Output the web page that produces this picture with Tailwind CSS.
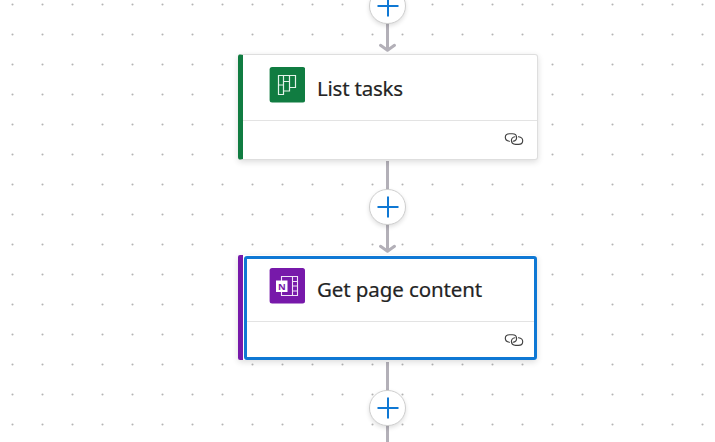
<!DOCTYPE html>
<html lang="en">
<head>
<meta charset="utf-8">
<title>Flow designer</title>
<script src="https://cdn.jsdelivr.net/npm/@tailwindcss/browser@4"></script>
</head>
<body class="relative h-[442px] w-[715px] overflow-hidden bg-white font-['Segoe_UI','Noto_Sans',sans-serif] text-[#242424]">
<svg class="absolute inset-0" width="715" height="442" fill="none">
  <defs>
    <pattern id="dots" width="30" height="30" x="-2" y="-10" patternUnits="userSpaceOnUse"><circle cx="14.5" cy="14.5" r="1.05" fill="#b4b4b4"/></pattern>
    <symbol id="link" viewBox="0 0 20 14" fill="none" stroke="#424242" stroke-width="1.15" stroke-linecap="round">
      <path d="M5.4 9.3C2.9 9 1.3 7.3 1.3 5.3 1.3 3.1 3 1.7 5.6 1.7h2.8c2.5 0 4.2 1.5 4.2 3.7 0 2.1-1.5 3.5-3.6 3.8"/>
      <path d="M14.6 4.7c2.4.3 4.1 2 4.1 4 0 2.2-1.7 3.6-4.3 3.6h-2.8c-2.5 0-4.2-1.5-4.2-3.7 0-2.1 1.5-3.5 3.6-3.8"/>
    </symbol>
  </defs>
  <rect width="715" height="442" fill="url(#dots)"/>
  <g stroke="#b3b0b8" stroke-width="3">
    <path d="M387.5 0V50M387.5 161V251M387.5 362V442"/>
    <path stroke-linecap="round" stroke-linejoin="round" d="M380.5 45.3L387.5 50.3L394.5 45.3M380.5 246.3L387.5 251.3L394.5 246.3"/>
  </g>
</svg>

<button aria-label="Insert step" class="absolute left-[369px] top-[-12px] flex h-9 w-[37px] items-center justify-center rounded-full border border-[#cfcfcf] bg-white shadow-[0_2px_4px_#00000020]"><svg class="ml-px" width="22" height="22" stroke="#0f78d4" stroke-width="2"><path d="M0.5 11H21.5M11 0.5V21.5"/></svg></button>
<button aria-label="Insert step" class="absolute left-[369px] top-[189px] flex h-9 w-[37px] items-center justify-center rounded-full border border-[#cfcfcf] bg-white shadow-[0_2px_4px_#00000020]"><svg class="ml-px" width="22" height="22" stroke="#0f78d4" stroke-width="2"><path d="M0.5 11H21.5M11 0.5V21.5"/></svg></button>
<button aria-label="Insert step" class="absolute left-[369px] top-[390px] flex h-9 w-[37px] items-center justify-center rounded-full border border-[#cfcfcf] bg-white shadow-[0_2px_4px_#00000020]"><svg class="ml-px" width="22" height="22" stroke="#0f78d4" stroke-width="2"><path d="M0.5 11H21.5M11 0.5V21.5"/></svg></button>

<section class="absolute left-[238px] top-[54px] flex h-[106px] w-[300px] flex-col rounded-[3px] border border-l-[5px] border-[#dedede] border-l-[#107c41] bg-white shadow-[0_2px_6px_#00000024]">
  <div class="flex h-[66px] border-b border-[#e3e3e3] pl-[26px] pt-3">
    <svg class="size-9 shrink-0" viewBox="0 0 36 36" fill="none"><rect x="0.6" width="35.6" height="35.6" rx="2.5" fill="#107c41"/><g stroke="#e4f3ea" stroke-width="1.2"><path d="M9.5 8.5H26.5V20.5H20.5V24H14.5V27.5H9.5ZM14.5 8.5V24M20.5 8.5V20.5M9.5 18H14.5M14.5 14.5H20.5"/></g></svg>
    <h2 class="ml-3 mt-[7px] whitespace-nowrap text-[20.5px] leading-7 tracking-[-0.22px] [-webkit-text-stroke:0.2px_#242424]">List tasks</h2>
  </div>
  <div class="flex flex-1 items-center justify-end pb-0.5 pr-[13px]"><svg class="h-[14px] w-5"><use href="#link"/></svg></div>
</section>

<section class="absolute left-[238px] top-[255px] flex h-[105px] w-[299px] rounded-[3px] bg-white shadow-[0_2px_6px_#00000024]">
  <div class="w-[5px] shrink-0 rounded-l-[2px] bg-[#7719aa]"></div>
  <div class="ml-px mt-px flex flex-1 flex-col rounded-[3px] border-[3px] border-[#0f78d4]">
    <div class="flex h-[63px] border-b border-[#e3e3e3] pl-[22px] pt-[9px]">
      <svg class="size-9 shrink-0" viewBox="0 0 36 36" fill="none"><rect x="0.6" width="35.4" height="35.6" rx="2.5" fill="#7719aa"/><g stroke="#f0e3f7" stroke-width="1.1"><path d="M12.5 13V8.5H28.5V27.5H12.5V23M23.5 8.5V27.5M23.5 13.5H28.5M23.5 18H28.5M23.5 23H28.5"/></g><rect x="7" y="12.5" width="11.5" height="11.5" fill="#fff"/><text x="12.75" y="21.5" text-anchor="middle" font-family="Noto Sans, sans-serif" font-size="9.5" font-weight="700" fill="#7719aa">N</text></svg>
      <h2 class="ml-3 mt-[7px] whitespace-nowrap text-[20.5px] leading-7 tracking-[-0.1px] [-webkit-text-stroke:0.2px_#242424]">Get page content</h2>
    </div>
    <div class="flex flex-1 items-center justify-end pr-2.5"><svg class="h-[14px] w-5"><use href="#link"/></svg></div>
  </div>
</section>
</body>
</html>
